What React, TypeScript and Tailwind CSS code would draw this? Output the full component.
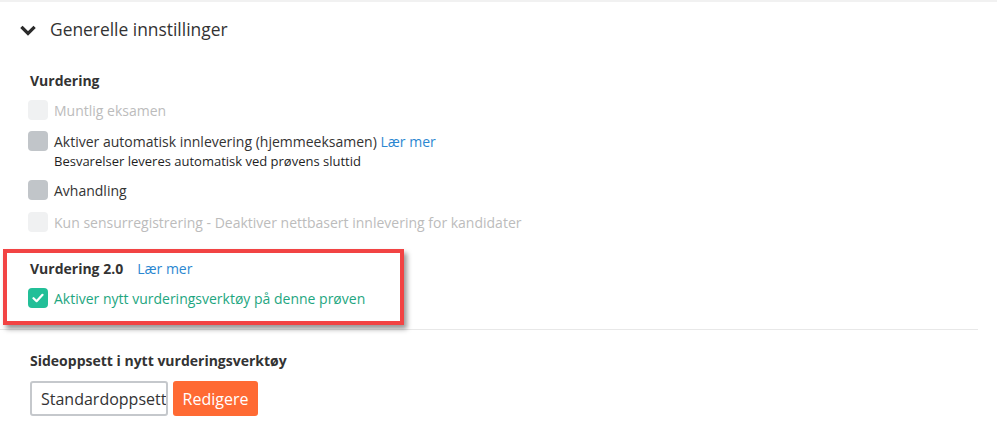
import React from "react";

function Box({ variant }: { variant: "disabled" | "off" | "on" }) {
  if (variant === "on") {
    return (
      <span className="flex h-[20px] w-[20px] shrink-0 items-center justify-center rounded-[4px] bg-[#22bf98]">
        <svg width="12" height="10" viewBox="0 0 12 10" fill="none">
          <path d="M1.5 5.2 L4.6 8.2 L10.5 1.8" stroke="white" strokeWidth="2.2" strokeLinecap="round" strokeLinejoin="round" />
        </svg>
      </span>
    );
  }
  return (
    <span
      className={
        "block h-[20px] w-[20px] shrink-0 rounded-[4px] " +
        (variant === "disabled" ? "bg-[#f0f1f2]" : "bg-[#c1c5c9]")
      }
    />
  );
}

export default function App() {
  return (
    <div
      className="relative h-[442px] w-[997px] overflow-hidden border-t-2 border-[#f1f1f1] bg-white text-[#333]"
      style={{ fontFamily: '"Open Sans", sans-serif' }}
    >
      {/* header */}
      <div className="flex h-[56px] items-center pl-[20px]">
        <svg width="16" height="12" viewBox="0 0 16 12" className="mt-[2px]">
          <path d="M2.5 3 L8 8.5 L13.5 3" stroke="#2b2b2b" strokeWidth="3.2" fill="none" strokeLinecap="square" />
        </svg>
        <span className="ml-[14px] text-[17.4px] leading-none text-[#333]">Generelle innstillinger</span>
      </div>

      <div className="pl-[30px]">
        <div className="mt-[13px] text-[14px] font-bold leading-[20px] text-[#333]">Vurdering</div>

        <div className="mt-[9px] flex h-[20px] items-center gap-[6px]" style={{ marginLeft: -2 }}>
          <Box variant="disabled" />
          <span className="text-[14px] text-[#bcbcbc]">Muntlig eksamen</span>
        </div>

        <div className="mt-[11px] flex h-[20px] items-center gap-[6px]" style={{ marginLeft: -2 }}>
          <Box variant="off" />
          <span className="text-[14px] text-[#333]">
            Aktiver automatisk innlevering (hjemmeeksamen) <span className="text-[#2b87d1]">Lær mer</span>
          </span>
        </div>
        <div className="ml-[24px] text-[13px] leading-[20px] text-[#1f1f1f]">
          Besvarelser leveres automatisk ved prøvens sluttid
        </div>

        <div className="mt-[9px] flex h-[20px] items-center gap-[6px]" style={{ marginLeft: -2 }}>
          <Box variant="off" />
          <span className="text-[14px] text-[#333]">Avhandling</span>
        </div>

        <div className="mt-[12px] flex h-[20px] items-center gap-[6px]" style={{ marginLeft: -2 }}>
          <Box variant="disabled" />
          <span className="text-[14px] text-[#bcbcbc]">
            Kun sensurregistrering - Deaktiver nettbasert innlevering for kandidater
          </span>
        </div>
      </div>

      {/* highlighted section */}
      <div className="relative mt-[17px]">
        <div className="absolute left-0 right-[19px] top-[80px] h-px bg-[#e8e8e8]" />
        <div className="relative ml-[3px] h-[76px] w-[401px] border-[4px] border-[#f24444] bg-white pl-[23px] shadow-[3px_4px_5px_rgba(0,0,0,0.4)]">
          <div className="mt-[6px] flex items-center text-[14px] leading-[20px]">
            <span className="font-bold text-[#333]">Vurdering 2.0</span>
            <span className="ml-[14px] text-[#2b87d1]">Lær mer</span>
          </div>
          <div className="mt-[9px] flex h-[20px] items-center gap-[6px]" style={{ marginLeft: -2 }}>
            <Box variant="on" />
            <span className="text-[14px] text-[#1ea67f]">Aktiver nytt vurderingsverktøy på denne prøven</span>
          </div>
        </div>
      </div>

      <div className="pl-[30px]">
        <div className="mt-[26px] text-[14px] font-bold leading-[20px] text-[#333]">
          Sideoppsett i nytt vurderingsverktøy
        </div>
        <div className="mt-[10px] flex items-stretch gap-[5px]">
          <div className="flex h-[35px] w-[138px] items-center overflow-hidden whitespace-nowrap rounded-[3px] border-2 border-[#c5c8cc] pl-[9px] text-[16px] text-[#333]">
            Standardoppsett
          </div>
          <div className="flex h-[35px] w-[85px] items-center justify-center rounded-[3px] bg-[#ff6a33] text-[16px] text-white">
            Redigere
          </div>
        </div>
      </div>
    </div>
  );
}
